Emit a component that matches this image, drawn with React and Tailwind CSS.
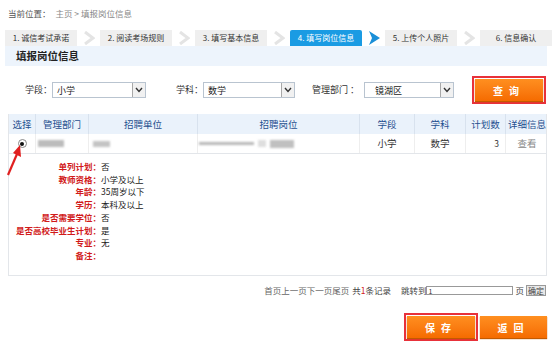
const font = { fontFamily: '"Noto Sans CJK SC", "Liberation Sans", sans-serif' };

const steps = ["1. 诚信考试承诺", "2. 阅读考场规则", "3. 填写基本信息", "4. 填写岗位信息", "5. 上传个人照片", "6. 信息确认"];

const details = [
  ["单列计划", "否"],
  ["教师资格", "小学及以上"],
  ["年龄", "35周岁以下"],
  ["学历", "本科及以上"],
  ["是否需要学位", "否"],
  ["是否高校毕业生计划", "是"],
  ["专业", "无"],
  ["备注", ""],
];

function Chevron({ active }) {
  return (
    <div className="w-[23px] flex justify-center items-center">
      {active ? (
        <svg width="12" height="14" viewBox="0 0 12 14">
          <path d="M1 0 L12 7 L1 14 L4 7 Z" fill="#1a8fd8" />
        </svg>
      ) : (
        <svg width="12" height="14" viewBox="0 0 12 14">
          <path d="M2 1 L10 7 L2 13" fill="none" stroke="#e4e4e4" strokeWidth="3" />
        </svg>
      )}
    </div>
  );
}

function Select({ value, w }) {
  return (
    <div className={`flex items-center h-[16px] border border-[#b9c4d0] bg-white shrink-0 ${w}`}>
      <span className="flex-1 pl-[4px] text-[9px] text-[#222] leading-none whitespace-nowrap">{value}</span>
      <div className="w-[13px] h-[14px] border-l border-[#a8a8a8] bg-[#f1f1f1] flex items-center justify-center">
        <svg width="8" height="6" viewBox="0 0 8 6">
          <path d="M1 1 L4 4.5 L7 1" fill="none" stroke="#333" strokeWidth="1.4" />
        </svg>
      </div>
    </div>
  );
}

function OrangeBtn({ label, framed, w }) {
  const btn = (
    <div className={`h-[22px] ${w} bg-gradient-to-b from-[#ff8f1f] to-[#f56b00] text-white text-[10px] font-bold flex items-center justify-center tracking-[6px] shadow-[0_1px_1px_#c35a00] whitespace-nowrap`}>
      {label}
    </div>
  );
  if (!framed) return btn;
  return <div className="border-2 border-[#e8313a] p-[1px]">{btn}</div>;
}

const cols = "grid grid-cols-[27px_53px_109px_162px_55px_51px_40px_42px]";

export default function App() {
  return (
    <div className="w-[554px] h-[343px] bg-white overflow-hidden relative" style={font}>
      <div className="pl-[8px] pt-[7px] h-[30px] text-[8.5px] text-[#555] whitespace-nowrap">
        当前位置： <span className="text-[#888] ml-[3px]">主页 &gt; 填报岗位信息</span>
      </div>

      <div className="flex pl-[5px] h-[16px]">
        {steps.map((s, i) => (
          <div key={s} className="flex">
            <div
              className={`w-[72px] h-[16px] flex items-center justify-center text-[8px] whitespace-nowrap ${
                i === 3 ? "bg-[#1a9be3] text-white rounded-t-[2px]" : "bg-[#efefef] text-[#333]"
              }`}
            >
              {s}
            </div>
            {i < 5 && <Chevron active={i === 3} />}
          </div>
        ))}
      </div>

      <div className="mx-[5px] w-[542px] h-[20px] bg-[#edf4fc] flex items-center pl-[11px] text-[10.5px] font-bold text-[#222]">
        填报岗位信息
      </div>

      <div className="flex items-center h-[48px] pl-[25px] text-[9px] text-[#333] whitespace-nowrap">
        <span className="shrink-0 w-[27px]">学段：</span>
        <Select value="小学" w="w-[94px]" />
        <span className="shrink-0 ml-[30px] w-[27px]">学科：</span>
        <Select value="数学" w="w-[92px]" />
        <span className="shrink-0 ml-[17px] w-[52px]">管理部门 ：</span>
        <Select value="镜湖区" w="w-[90px] pl-[6px]" />
        <div className="ml-[18px]">
          <OrangeBtn label="查询" framed w="w-[68px]" />
        </div>
      </div>

      <div className="mx-[8px] w-[539px] h-[162px] border border-[#e3e6ea] border-t-0 relative">
        <div className={`${cols} h-[20px] bg-[#eaf2fb] text-[9.5px] text-[#1f4f8f] whitespace-nowrap`}>
          {["选择", "管理部门", "招聘单位", "招聘岗位", "学段", "学科", "计划数", "详细信息"].map((h, i) => (
            <div key={h} className={`flex items-center justify-center ${i < 7 ? "border-r border-[#d8e2ee]" : ""}`}>{h}</div>
          ))}
        </div>
        <div className={`${cols} h-[20px] text-[9.5px] text-[#333] border-b border-[#e3e6ea]`}>
          <div className="flex items-center justify-center border-r border-[#eee]">
            <div className="w-[9px] h-[9px] rounded-full border border-[#888] bg-white flex items-center justify-center">
              <div className="w-[4px] h-[4px] rounded-full bg-[#111]" />
            </div>
          </div>
          <div className="flex items-center pl-[2px] border-r border-[#eee]">
            <div className="w-[26px] h-[7px] bg-[#bcbcbc] blur-[1px]" />
          </div>
          <div className="flex items-center pl-[4px] border-r border-[#eee]">
            <div className="w-[17px] h-[6px] bg-[#c4c4c4] blur-[1px]" />
          </div>
          <div className="flex items-center justify-end pr-[65px] gap-[4px] border-r border-[#eee]">
            <div className="w-[55px] h-[3px] bg-[#b8b8b8] blur-[1px]" />
            <div className="w-[8px] h-[7px] bg-[#dedede] blur-[1px]" />
            <div className="w-[24px] h-[8px] bg-[#c0c0c0] blur-[1px]" />
          </div>
          <div className="flex items-center justify-center border-r border-[#eee]">小学</div>
          <div className="flex items-center justify-center border-r border-[#eee]">数学</div>
          <div className="flex items-center justify-end pr-[6px] text-[8.5px] border-r border-[#eee]">3</div>
          <div className="flex items-center justify-center text-[#888]">查看</div>
        </div>

        <div className="pt-[6px] flex flex-col">
          {details.map(([k, v]) => (
            <div key={k} className="flex h-[12.7px] items-center text-[8.5px] leading-none whitespace-nowrap">
              <span className="w-[92px] shrink-0 text-right font-bold text-[#d11a1a]">{k}：</span>
              <span className="text-[#222]">{v}</span>
            </div>
          ))}
        </div>
      </div>

      <svg className="absolute left-[5px] top-[142px]" width="20" height="36" viewBox="0 0 20 36">
        <path d="M3 33 L12 12" stroke="#e02020" strokeWidth="2.2" fill="none" />
        <path d="M15 3 L16 15 L8 11 Z" fill="#e02020" />
      </svg>

      <div className="flex justify-end items-center pr-[8px] mt-[9px] h-[11px] text-[8.5px] text-[#444] whitespace-nowrap">
        <span className="text-[#666]">首页上一页下一页尾页</span>
        <span className="ml-[3px]">共<span className="text-[#d11a1a]">1</span>条记录</span>
        <span className="ml-[10px]">跳转到</span>
        <div className="w-[87px] h-[9px] border border-[#999] bg-white text-[7px] leading-[8px] pl-[1px] text-[#333]">1</div>
        <span className="ml-[2px]">页</span>
        <div className="ml-[2px] h-[11px] px-[1px] border border-[#999] bg-[#e8e8e8] text-[8px] leading-[9px]">确定</div>
      </div>

      <div className="flex justify-end items-center gap-[2px] pr-[7px] mt-[17px]">
        <OrangeBtn label="保存" framed w="w-[68px]" />
        <OrangeBtn label="返回" w="w-[67px]" />
      </div>
    </div>
  );
}
